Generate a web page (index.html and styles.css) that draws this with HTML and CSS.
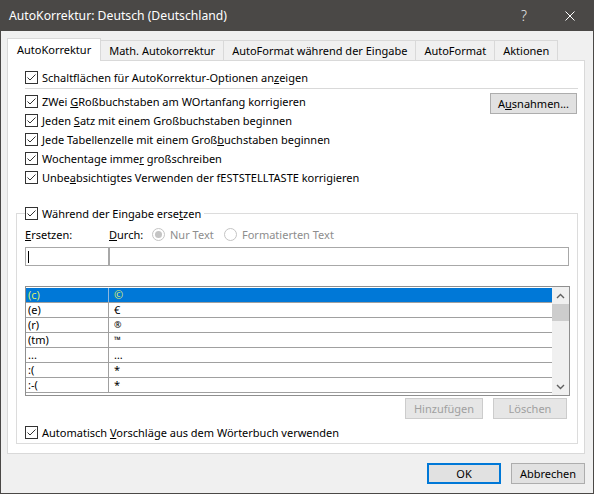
FILE: index.html
```html
<!DOCTYPE html>
<html lang="de">
<head>
<meta charset="utf-8">
<title>AutoKorrektur</title>
<link rel="stylesheet" href="styles.css">
</head>
<body>
<div class="win">
  <div class="titlebar">
    <span class="title">AutoKorrektur: Deutsch (Deutschland)</span>
    <span class="tbtn help">?</span>
    <span class="tbtn close"><svg width="10" height="10" viewBox="0 0 10 10"><path d="M0.5 0.5L9.5 9.5M9.5 0.5L0.5 9.5" stroke="#ffffff" stroke-width="1" fill="none"/></svg></span>
  </div>
  <div class="content">
    <div class="tabs">
      <div class="tab active">AutoKorrektur</div>
      <div class="tab">Math. Autokorrektur</div>
      <div class="tab">AutoFormat während der Eingabe</div>
      <div class="tab">AutoFormat</div>
      <div class="tab">Aktionen</div>
    </div>
    <div class="panel">
      <div class="chk first"><span class="box"><svg width="11" height="11" viewBox="0 0 11 11"><path d="M1.5 5.5L4 8L9.5 2.5" stroke="#333" stroke-width="1" fill="none"/></svg></span><span>Schaltflächen für AutoKorrektur-Optionen an<u>z</u>eigen</span></div>
      <div class="sep"></div>
      <div class="opts">
        <div class="optlist">
          <div class="chk"><span class="box"><svg width="11" height="11" viewBox="0 0 11 11"><path d="M1.5 5.5L4 8L9.5 2.5" stroke="#333" stroke-width="1" fill="none"/></svg></span><span>ZWei <u>G</u>Roßbuchstaben am WOrtanfang korrigieren</span></div>
          <div class="chk"><span class="box"><svg width="11" height="11" viewBox="0 0 11 11"><path d="M1.5 5.5L4 8L9.5 2.5" stroke="#333" stroke-width="1" fill="none"/></svg></span><span>Jeden <u>S</u>atz mit einem Großbuchstaben beginnen</span></div>
          <div class="chk"><span class="box"><svg width="11" height="11" viewBox="0 0 11 11"><path d="M1.5 5.5L4 8L9.5 2.5" stroke="#333" stroke-width="1" fill="none"/></svg></span><span>Jede Tabellenzelle mit einem Groß<u>b</u>uchstaben beginnen</span></div>
          <div class="chk"><span class="box"><svg width="11" height="11" viewBox="0 0 11 11"><path d="M1.5 5.5L4 8L9.5 2.5" stroke="#333" stroke-width="1" fill="none"/></svg></span><span>Wochentage imme<u>r</u> großschreiben</span></div>
          <div class="chk"><span class="box"><svg width="11" height="11" viewBox="0 0 11 11"><path d="M1.5 5.5L4 8L9.5 2.5" stroke="#333" stroke-width="1" fill="none"/></svg></span><span>Unbe<u>a</u>bsichtigtes Verwenden der fESTSTELLTASTE korrigieren</span></div>
        </div>
        <button class="btn exc">A<u>u</u>snahmen...</button>
      </div>
      <fieldset class="group">
        <legend class="chk"><span class="box"><svg width="11" height="11" viewBox="0 0 11 11"><path d="M1.5 5.5L4 8L9.5 2.5" stroke="#333" stroke-width="1" fill="none"/></svg></span><span>Während der Eingabe erse<u>t</u>zen</span></legend>
        <div class="labels">
          <span class="lbl-ers"><u>E</u>rsetzen:</span>
          <span class="lbl-durch"><u>D</u>urch:</span>
          <span class="radio r1"><span class="dot on"></span><span>Nur Text</span></span>
          <span class="radio"><span class="dot"></span><span>Formatierten Text</span></span>
        </div>
        <div class="inputs">
          <div class="inp inp1"><span class="caret"></span></div>
          <div class="inp inp2"></div>
        </div>
        <div class="list">
          <div class="rows">
            <div class="r sel"><span class="c1">(c)</span><span class="c2">©</span></div>
            <div class="r"><span class="c1">(e)</span><span class="c2">€</span></div>
            <div class="r"><span class="c1">(r)</span><span class="c2 small">®</span></div>
            <div class="r"><span class="c1">(tm)</span><span class="c2 small">™</span></div>
            <div class="r"><span class="c1">...</span><span class="c2">…</span></div>
            <div class="r"><span class="c1">:(</span><span class="c2">*</span></div>
            <div class="r"><span class="c1">:-(</span><span class="c2">*</span></div>
          </div>
          <div class="scroll">
            <span class="arrow"><svg width="9" height="6" viewBox="0 0 9 6"><path d="M1 5L4.5 1.5L8 5" stroke="#606060" stroke-width="1.4" fill="none"/></svg></span>
            <span class="thumb"></span>
            <span class="track"></span>
            <span class="arrow"><svg width="9" height="6" viewBox="0 0 9 6"><path d="M1 1L4.5 4.5L8 1" stroke="#606060" stroke-width="1.4" fill="none"/></svg></span>
          </div>
        </div>
        <div class="lbtns">
          <button class="btn dis add">Hinzufügen</button>
          <button class="btn dis del">Löschen</button>
        </div>
        <div class="chk last"><span class="box"><svg width="11" height="11" viewBox="0 0 11 11"><path d="M1.5 5.5L4 8L9.5 2.5" stroke="#333" stroke-width="1" fill="none"/></svg></span><span>Automatisch <u>V</u>orschläge aus dem Wörterbuch verwenden</span></div>
      </fieldset>
    </div>
    <div class="footer">
      <button class="btn ok">OK</button>
      <button class="btn cancel">Abbrechen</button>
    </div>
  </div>
</div>
</body>
</html>
```
FILE: styles.css
```css
* { box-sizing: border-box; }
html, body { margin: 0; padding: 0; }
body {
  width: 594px;
  height: 494px;
  overflow: hidden;
  background: #f0f0f0;
  font-family: "Noto Sans", "Open Sans", sans-serif;
  font-size: 11px;
  color: #000;
}
u { text-decoration: underline; text-underline-offset: 1px; }

.win {
  width: 594px;
  height: 494px;
  border: 1px solid #4a4846;
  border-top: 0;
  background: #f0f0f0;
  display: flex;
  flex-direction: column;
}

.titlebar {
  height: 31px;
  flex: none;
  background: #4a4846;
  color: #ffffff;
  display: flex;
  align-items: center;
  padding-left: 8px;
}
.title { font-size: 12.2px; flex: 1; }
.tbtn {
  width: 46px;
  height: 31px;
  display: flex;
  align-items: center;
  justify-content: center;
}
.help { font-size: 14px; font-weight: 300; color: #e8e8e8; }

.content {
  flex: 1;
  padding: 7px 8px 0 6px;
}

.tabs {
  display: flex;
  align-items: flex-end;
  height: 22px;
}
.tab {
  height: 20px;
  line-height: 19px;
  padding: 0 8px;
  border: 1px solid #d9d9d9;
  border-bottom: 0;
  background: #f0f0f0;
  margin-left: -1px;
  white-space: nowrap;
}
.tab.active {
  margin-left: 0;
  height: 23px;
  line-height: 21px;
  margin-bottom: -1px;
  padding: 0 9px;
  background: #ffffff;
  position: relative;
  z-index: 1;
  border-right: 1px solid #d9d9d9;
}
.tab.active + .tab { margin-left: -1px; }

.panel {
  width: 578px;
  background: #ffffff;
  border: 1px solid #d9d9d9;
  padding: 7px 6px 9px 8px;
}

.chk {
  height: 19px;
  display: flex;
  align-items: center;
  gap: 4px;
  white-space: nowrap;
}
.panel > .chk.first { padding-left: 9px; }
.box {
  width: 13px;
  height: 13px;
  border: 1px solid #333333;
  background: #ffffff;
  display: flex;
  align-items: center;
  justify-content: center;
  flex: none;
}
.box svg { display: block; }

.sep {
  height: 1px;
  background: #d9d9d9;
  margin: 1px 0 0 9px;
}

.opts {
  display: flex;
  margin-top: 3px;
  padding-left: 9px;
}
.optlist { flex: 1; }

.btn {
  font-family: inherit;
  font-size: 11px;
  color: #000;
  background: #e1e1e1;
  border: 1px solid #adadad;
  height: 21px;
  padding: 0;
  margin: 0;
  line-height: 19px;
}
.exc {
  width: 87px;
  margin: 1px 1px 0 0;
  align-self: flex-start;
}

.group {
  margin: 17px 0 0 0;
  padding: 0 8px 1px 8px;
  border: 1px solid #dcdcdc;
  min-width: 0;
}
.group legend {
  padding: 0 3px 0 0;
  margin: 0;
}

.labels {
  margin-top: 2px;
  height: 19px;
  display: flex;
  align-items: center;
  white-space: nowrap;
}
.lbl-ers { width: 84px; }
.lbl-durch { width: 43px; }
.radio {
  display: flex;
  align-items: center;
  gap: 5px;
  color: #8d8d8d;
}
.r1 { width: 72px; }
.dot {
  width: 13px;
  height: 13px;
  border-radius: 50%;
  border: 1px solid #c4c4c4;
  background: #ffffff;
  display: flex;
  align-items: center;
  justify-content: center;
}
.dot.on::after {
  content: "";
  width: 7px;
  height: 7px;
  border-radius: 50%;
  background: #c4c4c4;
}

.inputs {
  display: flex;
  margin-top: 3px;
}
.inp {
  height: 19px;
  border: 1px solid #a8a8a8;
  background: #ffffff;
  display: flex;
  align-items: center;
}
.inp1 { width: 84px; }
.inp2 { width: 461px; }
.caret {
  width: 1px;
  height: 12px;
  background: #000;
  margin-left: 2px;
}

.list {
  margin-top: 20px;
  width: 545px;
  height: 110px;
  border: 1px solid #8f8f8f;
  background: #ffffff;
  display: flex;
  overflow: hidden;
}
.rows {
  flex: 1;
  padding-top: 1px;
  overflow: hidden;
}
.r {
  display: flex;
  height: 15px;
  line-height: 14px;
  border-bottom: 1px solid #a0a0a0;
  white-space: nowrap;
}
.c1 {
  width: 83px;
  border-right: 1px solid #a0a0a0;
  padding-left: 2px;
}
.c2 { padding-left: 5px; }
.c2.small { font-size: 9px; }
.r.sel {
  background: #0078d7;
  color: #dcee6e;
}
.r.sel .c1 { border-right-color: #8fb8de; }

.scroll {
  width: 17px;
  flex: none;
  background: #f0f0f0;
  display: flex;
  flex-direction: column;
}
.arrow {
  height: 17px;
  display: flex;
  align-items: center;
  justify-content: center;
  flex: none;
}
.thumb {
  height: 17px;
  background: #cdcdcd;
  flex: none;
}
.track { flex: 1; }

.lbtns {
  display: flex;
  justify-content: flex-end;
  gap: 10px;
  margin: 2px 2px 0 0;
}
.btn.dis {
  background: #e6e6e6;
  border-color: #cccccc;
  color: #a0a0a0;
}
.add { width: 78px; }
.del { width: 74px; }

.chk.last { margin-top: 4px; }

.footer {
  display: flex;
  justify-content: flex-end;
  gap: 10px;
  margin-top: 9px;
  padding-right: 0;
}
.footer .btn { width: 74px; }
.ok {
  border: 2px solid #0078d7;
  line-height: 17px;
}
```
